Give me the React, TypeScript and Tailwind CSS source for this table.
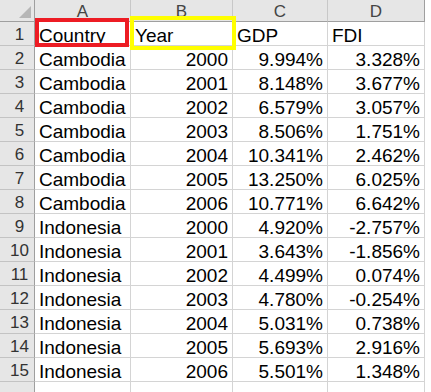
import React from "react";

type Row = [string, string, string, string];

const rows: Row[] = [
  ["Country", "Year", "GDP", "FDI"],
  ["Cambodia", "2000", "9.994%", "3.328%"],
  ["Cambodia", "2001", "8.148%", "3.677%"],
  ["Cambodia", "2002", "6.579%", "3.057%"],
  ["Cambodia", "2003", "8.506%", "1.751%"],
  ["Cambodia", "2004", "10.341%", "2.462%"],
  ["Cambodia", "2005", "13.250%", "6.025%"],
  ["Cambodia", "2006", "10.771%", "6.642%"],
  ["Indonesia", "2000", "4.920%", "-2.757%"],
  ["Indonesia", "2001", "3.643%", "-1.856%"],
  ["Indonesia", "2002", "4.499%", "0.074%"],
  ["Indonesia", "2003", "4.780%", "-0.254%"],
  ["Indonesia", "2004", "5.031%", "0.738%"],
  ["Indonesia", "2005", "5.693%", "2.916%"],
  ["Indonesia", "2006", "5.501%", "1.348%"],
];

const cols = ["A", "B", "C", "D"];

function RowHead({ n, last }: { n: string; last?: boolean }) {
  return (
    <div
      className={`bg-[#e6e6e6] border-r border-r-[#9f9f9f] ${last ? "" : "border-b border-b-[#c3c3c3]"} flex items-center justify-center pl-[5px] pt-[3px] text-[17px] text-[#333]`}
    >
      {n}
    </div>
  );
}

export default function App() {
  return (
    <div className="w-[431px] h-[392px] overflow-hidden bg-white font-['Liberation_Sans',Arial,sans-serif]">
      <div className="grid grid-cols-[35px_96px_102px_95px_97px_1fr] grid-rows-[22px] auto-rows-[24px]">
        {/* column header row */}
        <div className="relative bg-[#e6e6e6] border-r border-r-[#9f9f9f] border-b border-b-[#9f9f9f]">
          <div className="absolute right-[3px] bottom-[3px] w-0 h-0 border-l-[12px] border-l-transparent border-b-[12px] border-b-[#b6b6b6]" />
        </div>
        {cols.map((c) => (
          <div
            key={c}
            className="bg-[#e6e6e6] border-r border-r-[#c8c8c8] border-b border-b-[#9f9f9f] flex items-center justify-center pt-[3px] text-[17px] text-[#444]"
          >
            {c}
          </div>
        ))}
        <div className="bg-white border-l border-l-[#9f9f9f] -ml-px" />

        {rows.map((r, i) => (
          <React.Fragment key={i}>
            <RowHead n={String(i + 1)} />
            {r.map((v, j) => {
              const right = i > 0 && j > 0;
              return (
                <div
                  key={j}
                  className={`relative border-r border-b border-[#d4d4d4] flex items-end px-[4px] text-[19px] leading-[18px] text-black whitespace-nowrap ${right ? "justify-end" : "justify-start"}`}
                >
                  {v}
                  {i === 0 && j === 0 && (
                    <div className="absolute left-0 right-[1px] top-[-4px] bottom-[-2px] border-[4px] border-[#ed1c24] pointer-events-none" />
                  )}
                  {i === 0 && j === 1 && (
                    <div className="absolute left-[-1px] right-[-4px] top-[-6px] bottom-[-5px] border-[4px] border-[#ffff00] pointer-events-none z-10" />
                  )}
                </div>
              );
            })}
            <div className="bg-white" />
          </React.Fragment>
        ))}

        <RowHead n="" last />
        <div className="border-r border-[#d4d4d4]" />
        <div className="border-r border-[#d4d4d4]" />
        <div className="border-r border-[#d4d4d4]" />
        <div className="border-r border-[#d4d4d4]" />
        <div className="bg-white" />
      </div>
    </div>
  );
}
